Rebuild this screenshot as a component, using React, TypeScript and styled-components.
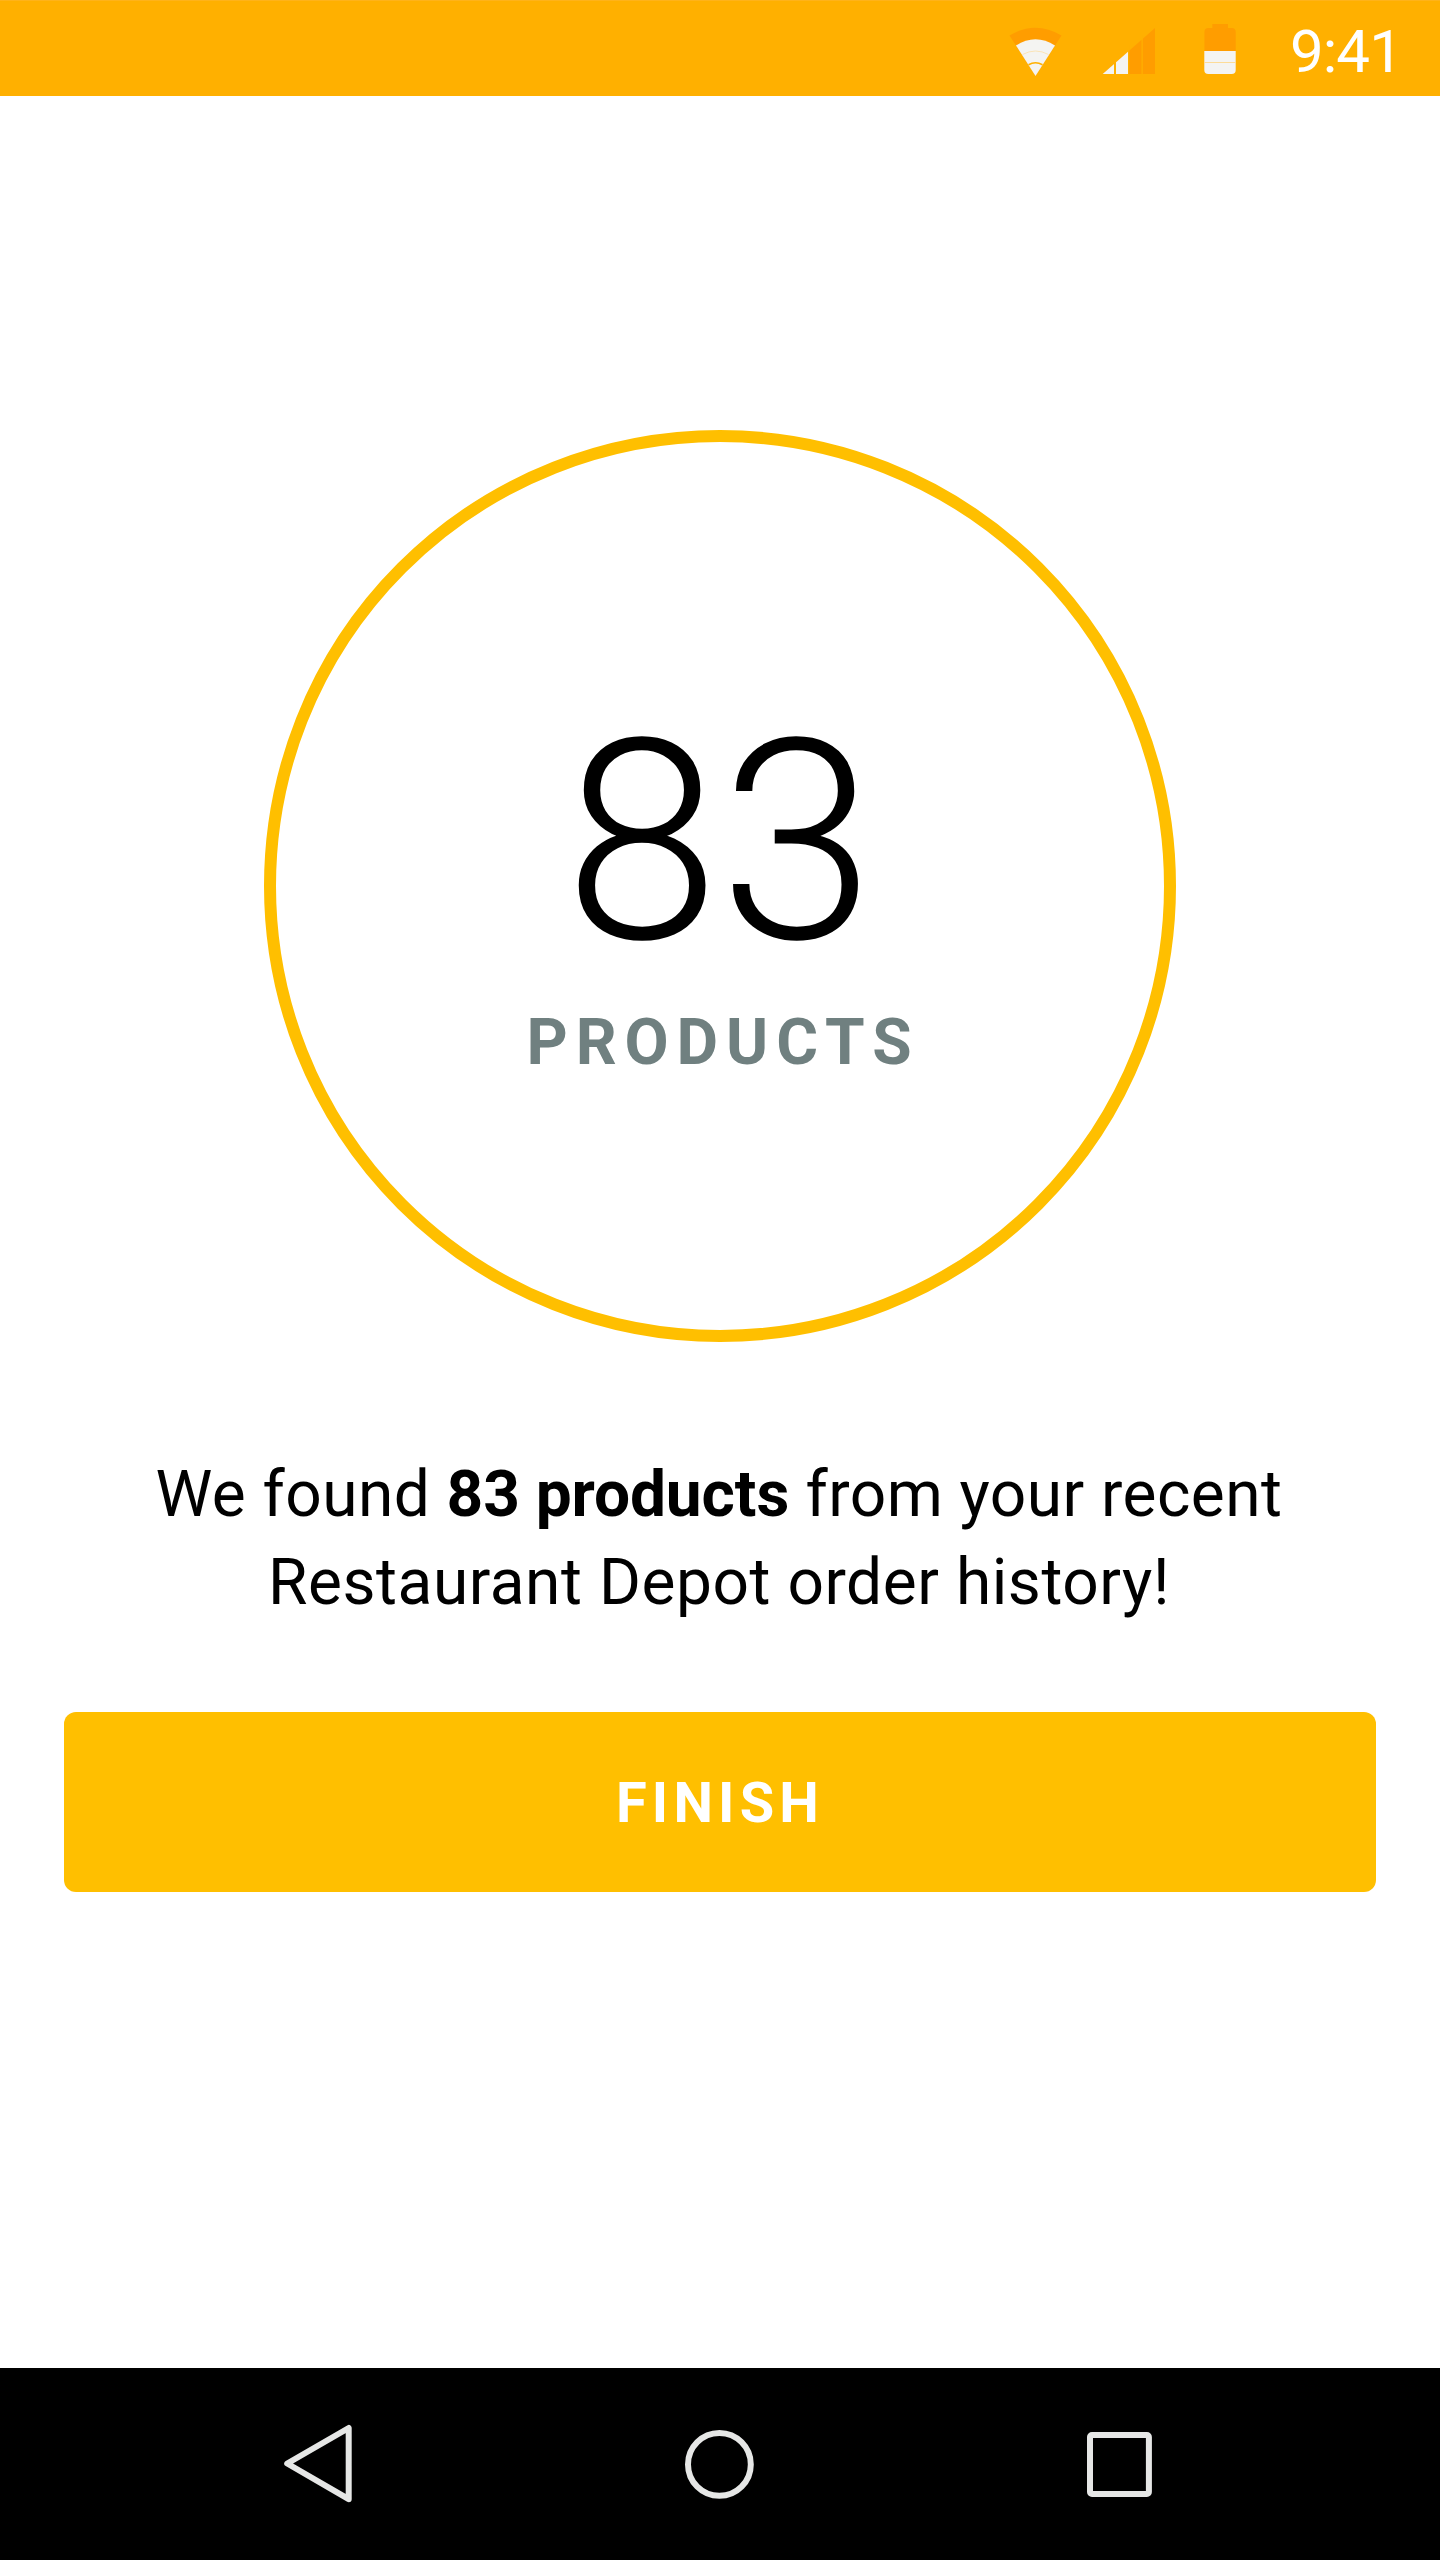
import React from "react";
import styled, { createGlobalStyle } from "styled-components";

const GlobalStyle = createGlobalStyle`
  *, *::before, *::after { box-sizing: border-box; }
  body { margin: 0; background: #fff; font-family: Roboto, sans-serif; }
`;

const Screen = styled.div`
  display: flex;
  flex-direction: column;
  width: 1440px;
  height: 2560px;
  background: #fff;
`;

const StatusBar = styled.header`
  display: flex;
  justify-content: flex-end;
  height: 96px;
  padding-right: 38px;
  background: #ffb000;
  border-top: 1px solid #ffb31a;
`;

const StatusIcons = styled.svg`
  display: block;
  width: 280px;
  height: 95px;
`;

const Clock = styled.time`
  width: 122px;
  font-size: 60px;
  line-height: 70px;
  padding-top: 16px;
  letter-spacing: -0.9px;
  text-align: right;
  color: #fff;
`;

const Main = styled.main`
  display: flex;
  flex: 1;
  flex-direction: column;
  align-items: center;
  padding: 334px 64px 0;
`;

const CountRing = styled.section`
  display: flex;
  flex-direction: column;
  align-items: center;
  width: 912px;
  height: 912px;
  padding-top: 260px;
  border: 12px solid #ffbf00;
  border-radius: 50%;
`;

const Count = styled.div`
  padding-right: 1px;
  font-size: 280px;
  font-weight: 300;
  line-height: 280px;
  color: #000;
`;

const CountLabel = styled.div`
  margin-top: 23px;
  padding-left: 6px;
  font-size: 64px;
  font-weight: 700;
  line-height: 76px;
  letter-spacing: 7.9px;
  color: #708080;
`;

const Message = styled.p`
  margin: 109px 0 0;
  padding-right: 2px;
  font-size: 64px;
  line-height: 88px;
  text-align: center;
  color: #000;

  strong {
    letter-spacing: -0.1px;
  }
`;

const MessageLine = styled.span<{ $tracking: number }>`
  display: block;
  letter-spacing: ${(p) => p.$tracking}px;
`;

const FinishButton = styled.button`
  width: 1312px;
  height: 180px;
  margin-top: 85px;
  padding: 2px 0 0;
  border: 0;
  border-radius: 12px;
  background: #ffbf00;
  color: #fff;
  font-family: inherit;
  font-size: 56px;
  font-weight: 700;
  letter-spacing: 5.2px;
`;

const NavBar = styled.nav`
  display: flex;
  justify-content: center;
  align-items: center;
  gap: 300px;
  height: 192px;
  padding-top: 2px;
  background: #000;
`;

const NavIcon = styled.svg`
  display: block;
  width: 100px;
  height: 110px;
  fill: none;
  stroke: #e6e7e6;
  stroke-width: 6;
  stroke-linejoin: round;
`;

export default function App() {
  return (
    <>
      <GlobalStyle />
      <Screen>
        <StatusBar>
          <StatusIcons viewBox="1000 1 280 95">
            {/* Wi-Fi */}
            <path d="M1009.5 35.5Q1035.5 20 1061.5 35.5L1035.5 76Z" fill="#ff9d00" />
            <path d="M1016 45.5Q1035.5 32.8 1055 45.5L1035.5 76Z" fill="#f4f4f2" />
            <path d="M1022.5 54.5Q1035.5 47.5 1048.5 54.5" fill="none" stroke="#fbe0a8" strokeWidth="0.8" />
            <path d="M1028.500 64.8Q1035.5 60.8 1042.5 64.8" fill="none" stroke="#ffb000" strokeWidth="1.6" />
            {/* Mobile signal */}
            <path d="M1155 28V74H1102.7Z" fill="#ff9d00" />
            <path d="M1128 51.7V74H1102.7Z" fill="#f4f4f2" />
            <path d="M1114 50h2v25h-2zM1128 45h1.3v30h-1.3zM1141.5 35h1.3v40h-1.3z" fill="#ffb000" />
            {/* Battery */}
            <path d="M1212.3 24h15.7v4h3.7q4 0 4 4v19h-31.3V32q0-4 4-4h3.9z" fill="#ff9d00" />
            <path d="M1204.3 51h31.4v19q0 4-4 4h-23.4q-4 0-4-4z" fill="#f4f4f2" />
            <path d="M1204.3 62h31.4v1h-31.4z" fill="#fddc98" />
          </StatusIcons>
          <Clock>9:41</Clock>
        </StatusBar>
        <Main>
          <CountRing>
            <Count>83</Count>
            <CountLabel>PRODUCTS</CountLabel>
          </CountRing>
          <Message>
            <MessageLine $tracking={0.45}>
              We found <strong>83 products</strong> from your recent
            </MessageLine>
            <MessageLine $tracking={0.55}>Restaurant Depot order history!</MessageLine>
          </Message>
          <FinishButton>FINISH</FinishButton>
        </Main>
        <NavBar>
          <NavIcon viewBox="270 2410 100 110">
            <path d="M348.7 2428V2499.2L287.2 2463.5Z" />
          </NavIcon>
          <NavIcon viewBox="670 2410 100 110">
            <circle cx="719.4" cy="2464.4" r="31.4" />
          </NavIcon>
          <NavIcon viewBox="1070 2410 100 110">
            <rect x="1090" y="2435" width="58.9" height="59" rx="2" />
          </NavIcon>
        </NavBar>
      </Screen>
    </>
  );
}
